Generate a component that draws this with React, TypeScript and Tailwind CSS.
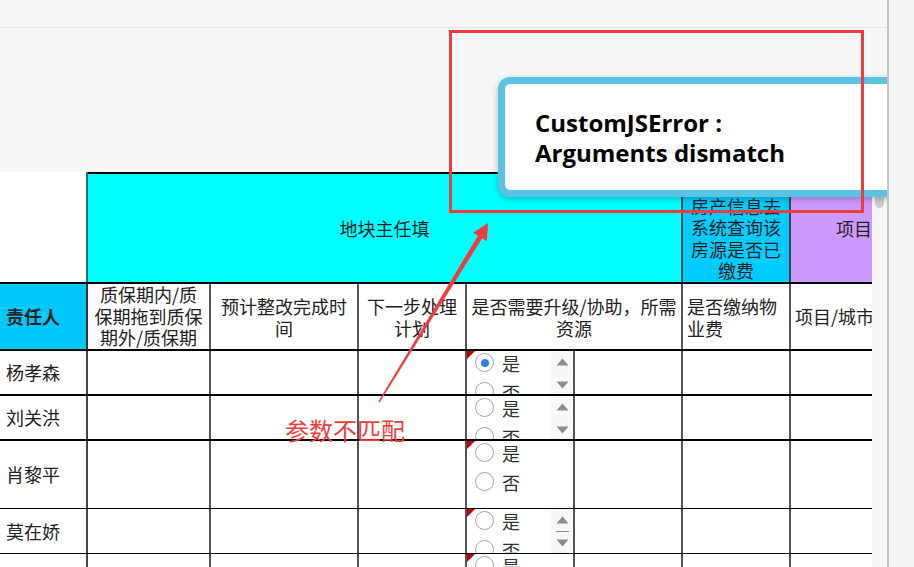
import React from "react";

function Radio({ checked }: { checked?: boolean }) {
  return (
    <span className="w-[19px] h-[19px] shrink-0 rounded-full border-[1.5px] border-[#a6a6a6] bg-white flex items-center justify-center">
      {checked && <span className="w-[8px] h-[8px] rounded-full bg-[#2f7fe5]" />}
    </span>
  );
}

function Up() {
  return (
    <svg width="13" height="8" viewBox="0 0 13 8">
      <polygon points="6.5,0.5 12.5,7.5 0.5,7.5" fill="#8c8c8c" />
    </svg>
  );
}

function Down() {
  return (
    <svg width="13" height="8" viewBox="0 0 13 8">
      <polygon points="0.5,0.5 12.5,0.5 6.5,7.5" fill="#8c8c8c" />
    </svg>
  );
}

function RadioCell({
  checked = false,
  flag = false,
  spinner = false,
  thumb = false,
}: {
  checked?: boolean;
  flag?: boolean;
  spinner?: boolean;
  thumb?: boolean;
}) {
  return (
    <div className="relative w-[108px] shrink-0 border-r-2 border-[#555] flex overflow-hidden">
      <div className="flex-1 flex flex-col -mt-[3px] pl-[8px]">
        {["是", "否"].map((l, i) => (
          <div key={l} className="h-[29px] shrink-0 flex items-center gap-[8px] text-[18px] text-[#333]">
            <Radio checked={checked && i === 0} />
            <span className="leading-none">{l}</span>
          </div>
        ))}
      </div>
      {spinner && (
        <div className="w-[22px] shrink-0 bg-[#f8f8f8] flex flex-col items-center pt-[7px]">
          <Up />
          <div className="h-[15px] flex items-center">
            {thumb && <div className="w-[13px] h-px bg-[#8c8c8c]" />}
          </div>
          <Down />
        </div>
      )}
      {flag && (
        <div className="absolute left-0 top-0 w-0 h-0 border-t-[8px] border-t-[#c00000] border-r-[8px] border-r-transparent" />
      )}
    </div>
  );
}

function DataRow({
  name,
  h,
  thick,
  radio,
}: {
  name: string;
  h: "a" | "b";
  thick: boolean;
  radio: React.ReactNode;
}) {
  const rowCls =
    (h === "a" ? "h-[45px] " : "h-[68px] ") +
    (thick ? "border-b-2 " : "border-b ") +
    "flex shrink-0 border-black";
  return (
    <div className={rowCls}>
      <div className="w-[88px] shrink-0 border-r-2 border-[#444] flex items-center pl-[6px] whitespace-nowrap">{name}</div>
      <div className="w-[123px] shrink-0 border-r-2 border-[#555]" />
      <div className="w-[148px] shrink-0 border-r-2 border-[#555]" />
      <div className="w-[108px] shrink-0 border-r-2 border-[#555]" />
      {radio}
      <div className="w-[108px] shrink-0 border-r-2 border-[#555]" />
      <div className="w-[108px] shrink-0 border-r-2 border-[#555]" />
      <div className="w-[108px] shrink-0 border-r-2 border-[#555]" />
    </div>
  );
}

export default function App() {
  return (
    <div className="relative w-[914px] h-[567px] flex overflow-hidden bg-[#f6f7f9] font-[family-name:'Noto_Sans_CJK_SC','Noto_Sans',sans-serif]">
      {/* main page */}
      <div className="relative w-[887px] h-full shrink-0 overflow-hidden flex flex-col">
        <div className="h-[28px] shrink-0 border-b border-[#e6e7ea]" />
        <div className="h-[144px] shrink-0" />
        <div className="flex flex-1 min-h-0">
          <div className="w-[872px] shrink-0 overflow-hidden bg-white text-[18px] text-[#222]">
            <div className="w-[1100px] flex flex-col">
              {/* header row 1 */}
              <div className="h-[112px] shrink-0 flex border-b-2 border-black">
                <div className="w-[88px] shrink-0 bg-white border-r-2 border-[#2e6b6b]" />
                <div className="w-[595px] shrink-0 bg-[#00ffff] border-t-2 border-t-black border-r-2 border-r-[#444] flex items-center justify-center">
                  地块主任填
                </div>
                <div className="w-[108px] shrink-0 bg-[#00ccff] border-t-2 border-t-black border-r-2 border-r-[#444] flex flex-col items-center justify-center leading-[21.5px] overflow-hidden whitespace-nowrap">
                  <span>需物业根据</span>
                  <span>房产信息去</span>
                  <span>系统查询该</span>
                  <span>房源是否已</span>
                  <span>缴费</span>
                </div>
                <div className="w-[164px] shrink-0 bg-[#cc99ff] border-t-2 border-t-black border-r-2 border-r-[#444] flex items-center justify-center">
                  项目部填
                </div>
              </div>
              {/* header row 2 */}
              <div className="h-[67px] shrink-0 flex border-b-2 border-black">
                <div className="w-[88px] shrink-0 bg-[#00c8f8] border-r-2 border-[#333] flex items-center pl-[6px] font-bold whitespace-nowrap">
                  责任人
                </div>
                <div className="w-[123px] shrink-0 border-r-2 border-[#555] overflow-hidden flex flex-col items-center leading-[21.5px] whitespace-nowrap">
                  <span>质保期内/质</span>
                  <span>保期拖到质保</span>
                  <span>期外/质保期</span>
                  <span>内</span>
                </div>
                <div className="w-[148px] shrink-0 border-r-2 border-[#555] flex flex-col items-center justify-center leading-[22px] whitespace-nowrap">
                  <span>预计整改完成时</span>
                  <span>间</span>
                </div>
                <div className="w-[108px] shrink-0 border-r-2 border-[#555] flex flex-col items-center justify-center leading-[22px] whitespace-nowrap">
                  <span>下一步处理</span>
                  <span>计划</span>
                </div>
                <div className="w-[216px] shrink-0 border-r-2 border-[#555] flex flex-col items-center justify-center leading-[22px] whitespace-nowrap">
                  <span>是否需要升级/协助，所需</span>
                  <span>资源</span>
                </div>
                <div className="w-[108px] shrink-0 border-r-2 border-[#555] flex flex-col items-start justify-center pl-[4px] leading-[22px] whitespace-nowrap">
                  <span>是否缴纳物</span>
                  <span>业费</span>
                </div>
                <div className="w-[164px] shrink-0 border-r-2 border-[#555] flex items-center pl-[4px] whitespace-nowrap overflow-hidden">
                  项目/城市公司负责人
                </div>
              </div>
              <DataRow name="杨孝森" h="a" thick radio={<RadioCell checked flag spinner />} />
              <DataRow name="刘关洪" h="a" thick radio={<RadioCell spinner />} />
              <DataRow name="肖黎平" h="b" thick={false} radio={<RadioCell flag />} />
              <DataRow name="莫在娇" h="a" thick={false} radio={<RadioCell flag spinner thumb />} />
              <DataRow name="" h="a" thick={false} radio={<RadioCell flag />} />
            </div>
          </div>
          <div className="w-[15px] shrink-0 bg-[#f6f6f6] flex justify-center">
            <div className="mt-[3px] w-[9px] h-[33px] rounded-full bg-[#cdcdcd]" />
          </div>
        </div>

        {/* error popup */}
        <div className="absolute left-[498px] top-[77px] w-[420px] h-[120px] rounded-[12px] border-[7px] border-[#5ac4e5] bg-white shadow-[0_2px_6px_rgba(0,0,0,0.25)] pl-[30px] pt-[24px]">
          <div className="font-[family-name:'Open_Sans',sans-serif] font-bold text-[24px] leading-[30px] text-black">
            <div>CustomJSError :</div>
            <div>Arguments dismatch</div>
          </div>
        </div>
      </div>

      {/* right gutter */}
      <div className="flex-1 border-l-2 border-[#c4c4c4] bg-[#f5f5f5]" />

      {/* annotations */}
      <div className="absolute left-[449px] top-[30px] w-[415px] h-[183px] border-[3px] border-[#f23c3c] pointer-events-none" />
      <svg className="absolute left-0 top-0 pointer-events-none" width="914" height="567" viewBox="0 0 914 567">
        <polygon
          points="379.6,402.4 482.1,238.3 486.8,241.2 488,223 473.2,232.8 477.9,235.7 378.4,401.6"
          fill="#f23c3c"
        />
      </svg>
      <div className="absolute left-[285px] top-[418px] text-[24px] leading-[24px] text-[#f23c3c] whitespace-nowrap">
        参数不匹配
      </div>
    </div>
  );
}
